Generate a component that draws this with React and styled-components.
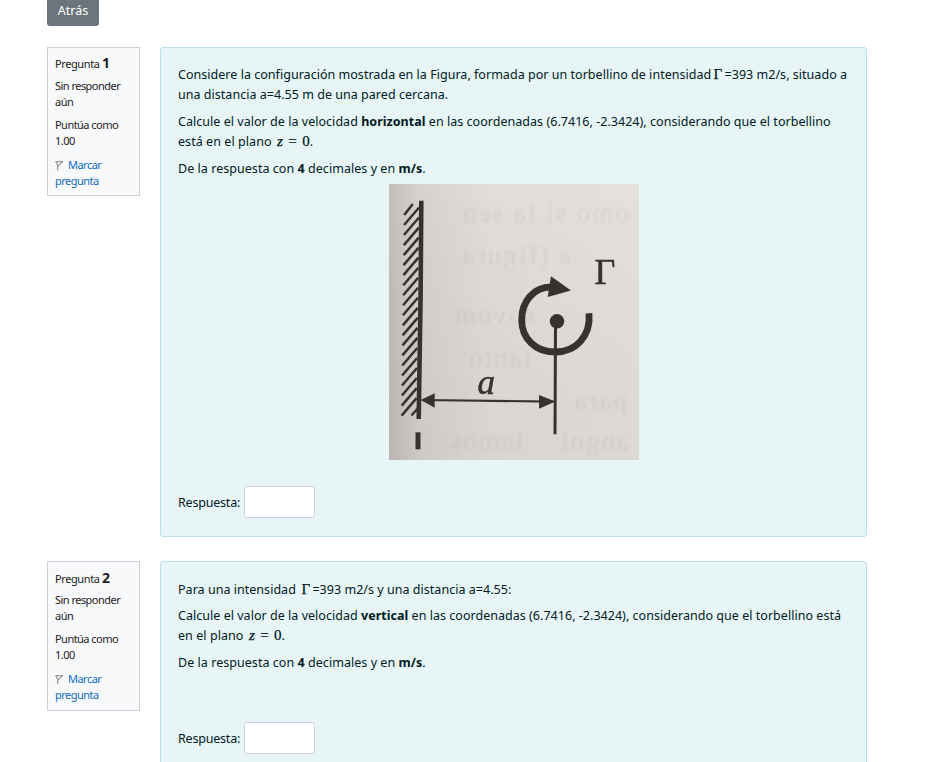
import React from 'react';
import styled, { createGlobalStyle } from 'styled-components';

const GlobalStyle = createGlobalStyle`
  * { box-sizing: border-box; }
  body {
    margin: 0;
    background: #fff;
    color: #1d2125;
    font-family: 'Noto Sans', 'Open Sans', sans-serif;
    font-size: 12.5px;
    line-height: 20px;
    overflow: hidden;
  }
`;

const Page = styled.main`
  width: 867px;
  height: 762px;
  padding-left: 47px;
  overflow: hidden;
`;

const BackButton = styled.button`
  display: block;
  width: 52px;
  height: 32px;
  margin: -6px 0 21px;
  padding: 2px 0 0;
  border: 0;
  border-radius: 3px;
  background: #6c757d;
  color: #fff;
  font: inherit;
`;

const Question = styled.section`
  display: flex;
  align-items: flex-start;
  gap: 20px;
  margin-bottom: 24px;
`;

const Info = styled.aside`
  flex: none;
  width: 93px;
  height: ${(p) => p.$height}px;
  padding: ${(p) => p.$top}px 7px 0;
  border: 1px solid #cad0d7;
  background: #f8f9fa;
  font-size: 11px;
  line-height: 16px;
  letter-spacing: -0.53px;
`;

const Number = styled.h3`
  margin: 0 0 ${(p) => p.$gap}px;
  font-size: 11px;
  font-weight: 400;
  line-height: 16px;
  height: 16px;
  white-space: nowrap;
  letter-spacing: -0.4px;

  b { font-size: 14px; font-weight: 700; }
`;

const InfoItem = styled.div`
  margin-bottom: ${(p) => p.$gap || 7}px;
  white-space: nowrap;
`;

const FlagLink = styled.a`
  display: block;
  color: #0f6cbf;
  white-space: nowrap;

  svg { margin-right: 5px; vertical-align: -2px; }
`;

const Formulation = styled.div`
  flex: none;
  width: 707px;
  height: ${(p) => p.$height}px;
  padding: ${(p) => p.$top}px 17px 0;
  border: 1px solid #b8e2ea;
  border-radius: 3px;
  background: #e7f5f7;
  color: #001a1e;
`;

const Paragraph = styled.p`
  margin: 0 0 ${(p) => (p.$gap === undefined ? 7 : p.$gap)}px;
`;

const Line = styled.span`
  display: block;
  height: 20px;
  white-space: pre;
  letter-spacing: ${(p) => p.$ls || 0}px;
`;

const Math = styled.span`
  font-family: 'Liberation Serif', serif;
  font-size: 15px;
  line-height: 1;
  letter-spacing: 0;
  word-spacing: ${(p) => p.$space || 0}px;
  -webkit-text-stroke: 0.25px currentColor;
`;

const Gamma = styled(Math)`
  display: inline-block;
  width: 10px;
  text-indent: -1px;
`;

const Figure = styled.svg`
  display: block;
  width: 250px;
  height: 276px;
  margin: 0 0 26px 211px;
`;

const Answer = styled.label`
  display: flex;
  align-items: center;
  height: 32px;
  margin-top: ${(p) => p.$top || 0}px;
`;

const AnswerText = styled.span`
  width: 66px;
  padding-top: 1px;
  white-space: nowrap;
  letter-spacing: -0.2px;
`;

const AnswerInput = styled.input`
  width: 71px;
  height: 32px;
  border: 1px solid #cad0d7;
  border-radius: 3px;
  background: #fff;
`;

const FlagIcon = () => (
  <svg width="8" height="12" viewBox="0 0 8 12" fill="none" stroke="#999" strokeWidth="1.2">
    <path d="M0.300 2.600H7.500L4.700 5.300L3.200 7L0.900 2.800M2.700 5.500V11.500" />
  </svg>
);

const hatches = Array.from({ length: 21 }, (_, i) => {
  const x = 15.2 - 0.13 * i;
  const y = 31 + 10.03 * i;
  return i === 0 ? `M${x} ${y}l8.6 -11` : `M${x} ${y}l15 -17.5`;
}).join('');

const ghosts = [
  [10, 38, 'omo si la sen'],
  [68, 80, 'a (figura'],
  [104, 140, 'sovom'],
  [108, 183, 'tanto'],
  [12, 226, 'para'],
  [10, 266, 'angul'],
  [116, 266, 'lamos'],
];

const VortexFigure = () => (
  <Figure viewBox="0 0 250 276">
    <defs>
      <linearGradient id="paper" x1="0" y1="0" x2="1" y2="0">
        <stop offset="0" stopColor="#beb9b5" />
        <stop offset=".12" stopColor="#d2ceca" />
        <stop offset=".4" stopColor="#dedbd7" />
        <stop offset="1" stopColor="#e1dedb" />
      </linearGradient>
      <linearGradient id="shade" x1="0" y1="0" x2="0" y2="1">
        <stop offset="0" stopColor="#fff" stopOpacity=".08" />
        <stop offset="1" stopColor="#746b65" stopOpacity=".05" />
      </linearGradient>
      <filter id="soft"><feGaussianBlur stdDeviation=".45" /></filter>
      <filter id="ghost"><feGaussianBlur stdDeviation="1.2" /></filter>
    </defs>
    <rect width="250" height="276" fill="url(#paper)" />
    <rect width="250" height="276" fill="url(#shade)" />
    <g filter="url(#ghost)" fill="#8f8781" opacity=".14" fontFamily="Liberation Serif, serif" fontSize="27" letterSpacing="2" transform="matrix(-1 0 0 1 250 0)">
      {ghosts.map(([x, y, text]) => <text key={text} x={x} y={y}>{text}</text>)}
    </g>
    <g filter="url(#soft)" stroke="#37332f" fill="none">
      <path d={hatches} strokeWidth="2.5" />
      <path d="M22.500 231.500l7 -8" strokeWidth="2.400" />
      <path d="M32.300 16.700L31.600 110L29.700 235" strokeWidth="4.600" />
      <path d="M29 248.300V265.300" strokeWidth="5" />
      <path d="M200 129.300C202 152 187 168 166 168C146 168 132.700 154 132.700 136C132.700 117 145 103 162 103" strokeWidth="6.800" />
      <path d="M166.500 142L166 250.300" strokeWidth="3" />
      <path d="M34 216L164 217.600" strokeWidth="2.200" />
      <g fill="#37332f" stroke="none">
        <path d="M162 92.300L182 106.500L158.700 113Z" />
        <path d="M31.700 216L45.700 209.300V223.700Z" />
        <path d="M166.500 217.600L150 211V224.700Z" />
        <circle cx="168" cy="137.300" r="7.200" />
      </g>
      <g fill="#37332f" strokeWidth=".5" fontFamily="Liberation Serif, serif">
        <text x="205.500" y="99.500" fontSize="36">Γ</text>
        <text x="88.500" y="209.700" fontSize="35" fontStyle="italic">a</text>
      </g>
    </g>
  </Figure>
);

const QuestionInfo = ({ number, height, gap, top }) => (
  <Info $height={height} $top={top}>
    <Number $gap={gap}>Pregunta <b>{number}</b></Number>
    <InfoItem>Sin responder<br />aún</InfoItem>
    <InfoItem $gap={8}>Puntúa como<br />1.00</InfoItem>
    <FlagLink><FlagIcon />Marcar<br />pregunta</FlagLink>
  </Info>
);

const Equation = () => (
  <Math $space={1.7}> <i>z</i> = 0</Math>
);

const Units = () => (
  <Line $ls={0.045}>De la respuesta con <b>4</b> decimales y en <b>m/s</b>.</Line>
);

export default function App() {
  return (
    <>
      <GlobalStyle />
      <Page>
        <BackButton>Atrás</BackButton>
        <Question>
          <QuestionInfo number="1" height={149} gap={7} top={7} />
          <Formulation $height={490} $top={17}>
            <Paragraph>
              <Line $ls={0.03}>Considere la configuración mostrada en la Figura, formada por un torbellino de intensidad <Gamma>Γ</Gamma>=393 m2/s, situado a</Line>
              <Line $ls={0.03}>una distancia a=4.55 m de una pared cercana.</Line>
            </Paragraph>
            <Paragraph>
              <Line $ls={0.035}>Calcule el valor de la velocidad <b>horizontal</b> en las coordenadas (6.7416, -2.3424), considerando que el torbellino</Line>
              <Line $ls={0.06}>está en el plano<Equation />.</Line>
            </Paragraph>
            <Paragraph $gap={5}><Units /></Paragraph>
            <VortexFigure />
            <Answer><AnswerText>Respuesta:</AnswerText><AnswerInput /></Answer>
          </Formulation>
        </Question>
        <Question>
          <QuestionInfo number="2" height={150} gap={6} top={8} />
          <Formulation $height={240} $top={18}>
            <Paragraph $gap={6}>
              <Line $ls={0.03}>Para una intensidad  <Gamma>Γ</Gamma>=393 m2/s y una distancia a=4.55:</Line>
            </Paragraph>
            <Paragraph>
              <Line $ls={0.03}>Calcule el valor de la velocidad <b>vertical</b> en las coordenadas (6.7416, -2.3424), considerando que el torbellino está</Line>
              <Line $ls={0.06}>en el plano<Equation />.</Line>
            </Paragraph>
            <Paragraph $gap={0}><Units /></Paragraph>
            <Answer $top={49}><AnswerText>Respuesta:</AnswerText><AnswerInput /></Answer>
          </Formulation>
        </Question>
      </Page>
    </>
  );
}
